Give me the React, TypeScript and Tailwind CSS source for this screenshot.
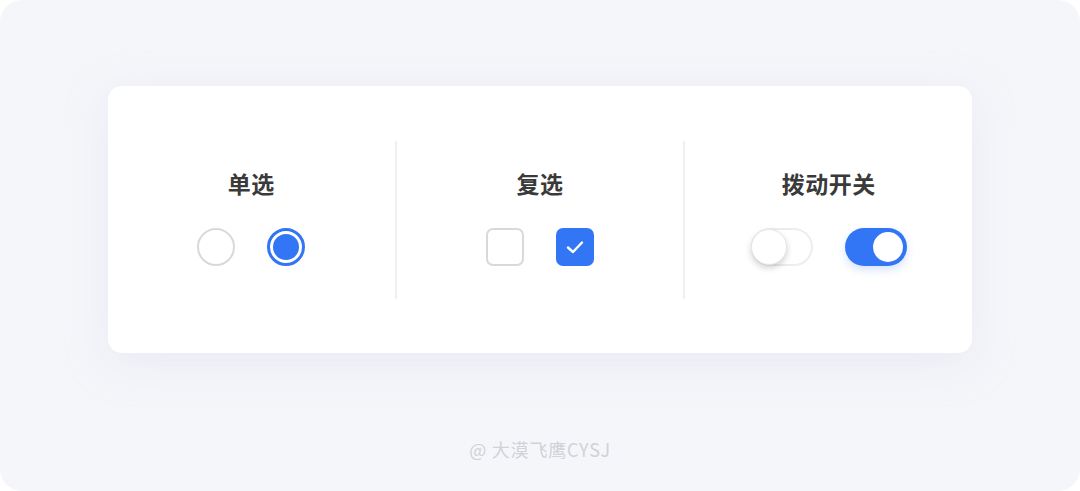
const font = { fontFamily: '"Noto Sans CJK SC", "Liberation Sans", sans-serif' };

const Section = ({ title, children, last }: { title: string; children: React.ReactNode; last?: boolean }) => (
  <div className={`flex-1 flex flex-col items-center pt-[26px] ${last ? '' : 'border-r-2 border-[#f0f0f2]'}`}>
    <div className="text-[23px] leading-[32px] font-bold text-[#3a3a3a] tracking-[0.5px]">{title}</div>
    <div className="mt-[29px] flex items-center gap-[32px]">{children}</div>
  </div>
);

export default function App() {
  return (
    <div className="w-[1080px] h-[491px] bg-white" style={font}>
      <div className="w-full h-full rounded-[22px] bg-[#f5f6fa] flex flex-col items-center pt-[86px]">
        <div className="w-[864px] h-[267px] bg-white rounded-[14px] shadow-[0_10px_40px_rgba(210,215,230,0.35)] flex items-center">
          <div className="w-full h-[158px] flex">
            <Section title="单选">
              <div className="w-[38px] h-[38px] rounded-full border-2 border-[#d9d9d9] bg-white" />
              <div className="w-[38px] h-[38px] rounded-full border-[3px] border-[#3275f5] bg-white flex items-center justify-center">
                <div className="w-[26px] h-[26px] rounded-full bg-[#3275f5]" />
              </div>
            </Section>
            <Section title="复选">
              <div className="w-[38px] h-[38px] rounded-[7px] border-2 border-[#d9d9d9] bg-white" />
              <div className="w-[38px] h-[38px] rounded-[7px] bg-[#3275f5] flex items-center justify-center">
                <svg width="18" height="14" viewBox="0 0 18 14" fill="none">
                  <path d="M2 7.5 L7 12 L16 2.5" stroke="white" strokeWidth="2.4" strokeLinecap="round" strokeLinejoin="round" />
                </svg>
              </div>
            </Section>
            <Section title="拨动开关" last>
              <div className="w-[62px] h-[38px] rounded-full border-2 border-[#ededed] bg-white flex items-center">
                <div className="w-[36px] h-[36px] -ml-[2px] rounded-full bg-white border border-[#e6e6e6] shadow-[0_3px_6px_rgba(0,0,0,0.18)]" />
              </div>
              <div className="w-[62px] h-[38px] rounded-full bg-[#3275f5] flex items-center justify-end shadow-[0_4px_8px_rgba(50,117,245,0.2)]">
                <div className="w-[36px] h-[36px] mr-[1px] rounded-full bg-white border-[3px] border-[#3275f5]" />
              </div>
            </Section>
          </div>
        </div>
        <div className="mt-[83px] text-[18px] text-[#d0d2d8] tracking-[0.8px]">@ 大漠飞鹰CYSJ</div>
      </div>
    </div>
  );
}
